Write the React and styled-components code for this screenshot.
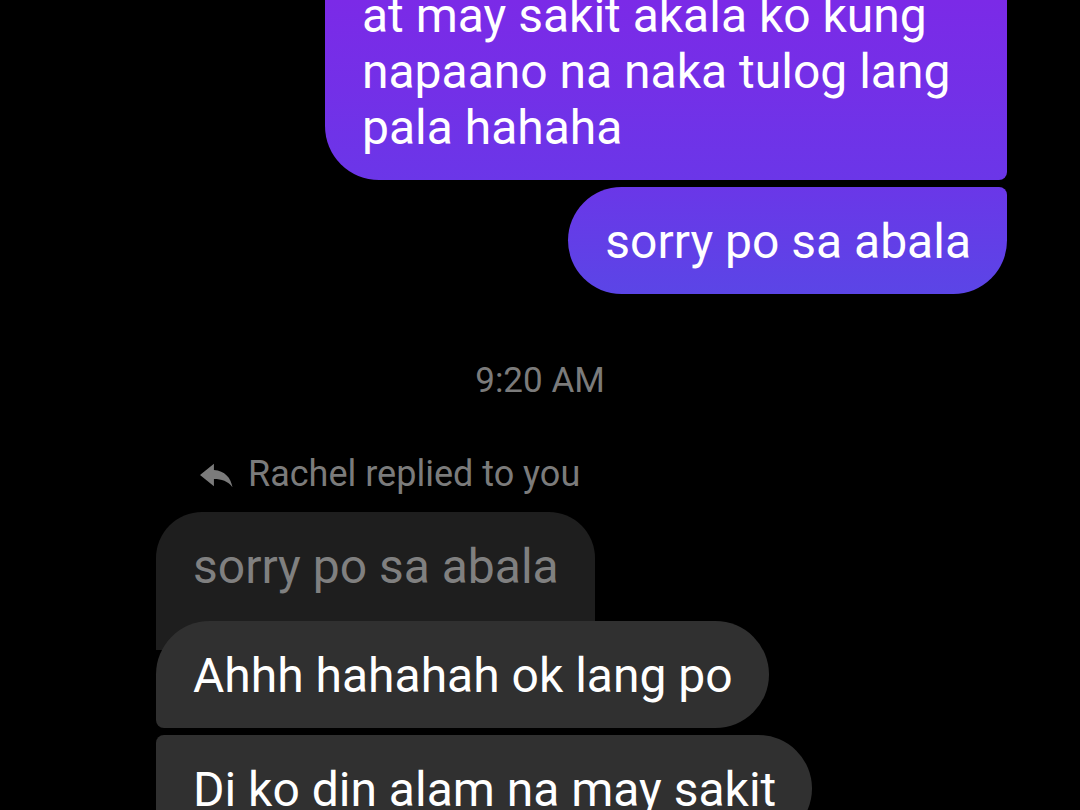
import React from 'react'
import styled, { createGlobalStyle, css } from 'styled-components'

const GlobalStyle = createGlobalStyle`
  html, body {
    margin: 0;
    padding: 0;
    background: #000;
  }
`

// colours
const Colors = {
  black: '#000',
  white: '#fff',
  muted: '#7b7b7b',
  quoted: '#1e1e1e',
  received: '#303030'
}

const BIG = 54
const SMALL = 8

const Screen = styled.div`
  width: 1080px;
  height: 810px;
  overflow: hidden;
  background: ${Colors.black};
  font-family: Roboto, 'Noto Sans', sans-serif;
`

// scrolled message list, the first bubble starts above the fold
const Thread = styled.div`
  display: flex;
  flex-direction: column;
  margin-top: -92px;
  padding: 0 73px 0 156px;
`

const BubbleText = css`
  box-sizing: border-box;
  max-width: 682px;
  padding: 27px 36px 24px 37px;
  font-size: 48px;
  line-height: 56px;
`

// sent message, colour taken from a gradient fixed to the screen
const SentBubble = styled.div`
  ${BubbleText};
  align-self: flex-end;
  margin-top: ${props => props.gap || 0}px;
  padding-top: ${props => props.padTop || 27}px;
  color: ${Colors.white};
  background: linear-gradient(180deg, #7b2ae7 0px, #6b36e8 180px, #5a46e6 300px);
  background-attachment: fixed;
  border-radius: ${BIG}px ${props => props.topRight}px ${props => props.bottomRight}px ${BIG}px;
`

// spans the full screen width so it centres on the screen, not the column
const Timestamp = styled.div`
  margin: 66px -73px 0 -156px;
  text-align: center;
  font-size: 35px;
  line-height: 42px;
  color: ${Colors.muted};
`

const ReplyLabel = styled.div`
  display: flex;
  align-items: center;
  gap: 15px;
  margin-top: 51px;
  padding-left: 44px;
  font-size: 36px;
  line-height: 42px;
  color: ${Colors.muted};

  svg {
    flex: none;
    margin-top: 2px;
  }
`

const QuotedBubble = styled.div`
  ${BubbleText};
  align-self: flex-start;
  margin-top: 17px;
  padding-bottom: 55px;
  color: #808080;
  background: ${Colors.quoted};
  border-radius: 46px 46px 0 0;
`

const ReceivedBubble = styled.div`
  ${BubbleText};
  position: relative;
  align-self: flex-start;
  margin-top: ${props => props.gap}px;
  color: ${Colors.white};
  background: ${Colors.received};
  border-radius: ${props => props.topLeft}px ${BIG}px ${BIG}px ${props => props.bottomLeft}px;
`

const ReplyIcon = () => (
  <svg width='33' height='25' viewBox='0 0 32 24' fill={Colors.muted}>
    <path d='M13.5 0.5 L0 11.5 L13.5 22.5 V15.5 C21 15.5 27 17.5 31.5 23.5 C30 14 24 7.5 13.5 6.6 Z' />
  </svg>
)

const App = () => (
  <React.Fragment>
    <GlobalStyle />
    <Screen>
      <Thread>
        <SentBubble padTop={80} topRight={SMALL} bottomRight={SMALL}>
          at may sakit akala ko kung napaano na naka tulog lang pala hahaha
        </SentBubble>
        <SentBubble gap={7} topRight={SMALL} bottomRight={BIG}>
          sorry po sa abala
        </SentBubble>

        <Timestamp>9:20 AM</Timestamp>

        <ReplyLabel>
          <ReplyIcon />
          Rachel replied to you
        </ReplyLabel>

        <QuotedBubble>sorry po sa abala</QuotedBubble>
        <ReceivedBubble gap={-29} topLeft={BIG} bottomLeft={SMALL}>
          Ahhh hahahah ok lang po
        </ReceivedBubble>
        <ReceivedBubble gap={7} topLeft={SMALL} bottomLeft={SMALL}>
          Di ko din alam na may sakit
        </ReceivedBubble>
      </Thread>
    </Screen>
  </React.Fragment>
)

export default App
